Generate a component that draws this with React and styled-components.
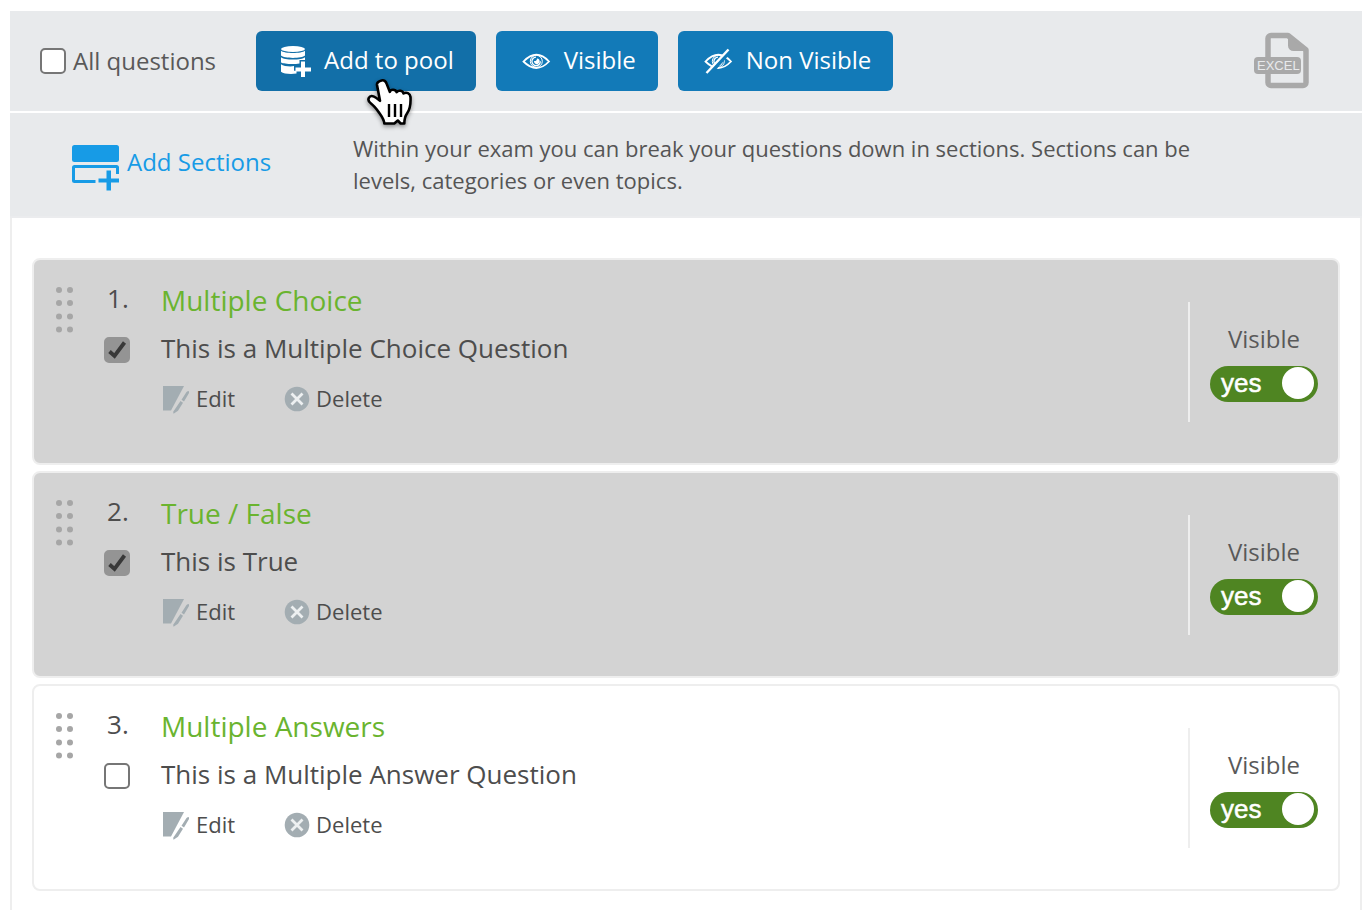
import React, { useState } from "react";
import styled, { createGlobalStyle } from "styled-components";

const GlobalStyle = createGlobalStyle`
  * {
    box-sizing: border-box;
  }
  body {
    margin: 0;
    background-color: white;
    color: #4d4d4d;
    font-family: "Open Sans", "Noto Sans", sans-serif;
  }
  button, input {
    font-family: inherit;
    margin: 0;
  }
  svg {
    display: block;
    flex: none;
  }
`;

const Page = styled.main`
  min-height: 100vh;
  padding: 11px 10px 0;
  display: flex;
  flex-direction: column;
`;

const Bar = styled.div`
  display: flex;
  align-items: center;
  background-color: #e8eaec;
`;

const Toolbar = styled(Bar)`
  gap: 20px;
  padding: 20px 52px 20px 30px;
  margin-bottom: 2px;
`;

const SelectAll = styled.label`
  display: flex;
  align-items: center;
  gap: 7px;
  margin-right: 20px;
  font-size: 24px;
  line-height: 32px;
  color: #595959;
`;

const Checkbox = styled.input`
  appearance: none;
  flex: none;
  display: block;
  width: 26px;
  height: 26px;
  border: 2px solid #767676;
  border-radius: 5px;
  background-color: white;
  &:checked {
    border-color: #949494;
    background: #949494 url("data:image/svg+xml,%3Csvg xmlns='http://www.w3.org/2000/svg' viewBox='0 0 22 22'%3E%3Cpath d='M3.5 12.5L8.5 17L18.5 3.5' fill='none' stroke='%23383838' stroke-width='3.8'/%3E%3C/svg%3E") center / 22px no-repeat;
  }
`;

const Button = styled.button`
  position: relative;
  display: flex;
  align-items: center;
  gap: 12px;
  height: 60px;
  padding: 0 22px 3px 24px;
  border: 0;
  border-radius: 6px;
  color: white;
  background-color: ${props => (props.$active ? "#126fa8" : "#127ab8")};
  font-size: 24px;
  white-space: nowrap;
  svg {
    margin-top: 2px;
  }
`;

const Pointer = styled.svg`
  position: absolute;
  top: 44px;
  left: 110px;
  z-index: 1;
  filter: drop-shadow(0 2px 2px rgba(0, 0, 0, 0.4));
`;

const Export = styled.a`
  margin-left: auto;
`;

const SectionBar = styled(Bar)`
  padding: 19px 160px 20px 62px;
  border-bottom: 2px solid #ebecee;
`;

const AddSections = styled.a`
  display: flex;
  align-items: flex-start;
  gap: 8px;
  flex: 0 0 281px;
  padding-top: 6px;
  color: #179be6;
  font-size: 24px;
  line-height: 38px;
  text-decoration: none;
`;

const Hint = styled.p`
  margin: 0;
  max-width: 860px;
  color: #555555;
  font-size: 22px;
  line-height: 32px;
`;

const List = styled.ol`
  flex: 1;
  display: flex;
  flex-direction: column;
  gap: 6px;
  margin: 0;
  padding: 40px 20px 18px;
  list-style: none;
  border: solid #eeeeee;
  border-width: 0 2px;
`;

const Card = styled.li`
  display: flex;
  align-items: flex-start;
  padding: 20px 20px 41px 22px;
  border: 2px solid #eeeeee;
  border-radius: 8px;
  background-color: ${props => (props.$selected ? "#d3d3d3" : "white")};
`;

const Handle = styled.svg`
  margin: 7px 30px 0 0;
`;

const Order = styled.div`
  width: 57px;
  font-size: 26px;
  line-height: 36px;
  span {
    display: block;
    padding-left: 3px;
    margin-bottom: 21px;
  }
`;

const Body = styled.div`
  flex: 1;
`;

const Title = styled.h2`
  margin: 0 0 8px;
  color: #6ab42f;
  font-size: 28px;
  font-weight: 400;
  line-height: 40px;
`;

const Question = styled.p`
  margin: 0 0 14px;
  font-size: 26px;
  line-height: 40px;
`;

const Actions = styled.div`
  display: flex;
  gap: 48px;
`;

const Action = styled.button`
  display: flex;
  align-items: center;
  gap: 6px;
  padding: 0 0 0 1px;
  border: 0;
  background: none;
  color: #4d4d4d;
  font-size: 22px;
  line-height: 32px;
  svg {
    margin-top: 2px;
  }
`;

const Visibility = styled.div`
  display: flex;
  flex-direction: column;
  align-items: center;
  gap: 11px;
  height: 120px;
  margin-top: 22px;
  padding: 21px 0 0 20px;
  border-left: 2px solid #eeeeee;
  color: #595959;
  font-size: 24px;
  line-height: 32px;
`;

const Switch = styled.label`
  position: relative;
  display: flex;
  align-items: center;
  justify-content: space-between;
  flex-direction: ${props => (props.$on ? "row" : "row-reverse")};
  width: 108px;
  height: 36px;
  padding: 0 4px 2px 11px;
  border-radius: 18px;
  background-color: ${props => (props.$on ? "#4f8522" : "#999999")};
  color: white;
  font-family: "Liberation Sans", Arial, sans-serif;
  font-size: 26px;
  -webkit-text-stroke: 0.5px white;
  input {
    position: absolute;
    inset: 0;
    width: 100%;
    height: 100%;
    opacity: 0;
  }
`;

const Knob = styled.i`
  width: 32px;
  height: 32px;
  border-radius: 50%;
  background-color: white;
`;

const PoolIcon = () => (
    <svg width="32" height="32" viewBox="0 0 32 32" fill="white">
        <ellipse cx="13" cy="4" rx="12" ry="3"/>
        <path d="M1 5.800c3 3 21 3 24 0v4.800c-3 3.200-21 3.200-24 0z"/>
        <path d="M1 12.200c3 3.200 21 3.200 24 0v2.800h-5.500v3.400c-6 1-16 .5-18.500-1z"/>
        <path d="M1 19.200c2.500 2 9 2.600 13 1.900v4.600h2.500v2.800c-6 .9-13 .3-15.500-1.800z"/>
        <path d="M21 16.500h4v6h6v4h-6v5.500h-4v-5.500h-5.500v-4h5.500z"/>
    </svg>
);

const EyeShape = () => (
    <g fill="none" stroke="white">
        <path d="M3.500 16.500Q16.500 3 29 16.500Q16.500 29.500 3.500 16.500Z" strokeWidth="1.800"/>
        <circle cx="16.300" cy="16.300" r="6" strokeWidth="1"/>
        <path d="M16 12.200a4.200 4.200 0 1 0 4.300 4" strokeWidth="1.300"/>
        <path d="M17 13.500c-.2 2-1 2.700-3 2.600c0 4.200 5.600 4.200 5.600 0c0-1.500-1-2.500-2.600-2.600z" fill="white" stroke="none"/>
    </g>
);

const EyeIcon = () => (
    <svg width="32" height="32" viewBox="0 0 32 32">
        <EyeShape/>
    </svg>
);

const EyeOffIcon = () => (
    <svg width="32" height="32" viewBox="0 0 32 32">
        <EyeShape/>
        <path d="M7.500 29L29 5" stroke="#127ab8" strokeWidth="4"/>
        <path d="M4.500 28L26.500 4.500" stroke="white" strokeWidth="2.400"/>
    </svg>
);

const PointerIcon = () => (
    <Pointer width="50" height="54" viewBox="0 0 50 54" aria-hidden="true">
        <path
            d="M15.500 3.500c2.400-.8 4.400.7 5.200 3.400l3.100 8c.6-2.700 5.600-3.200 6.800.2c1.800-2.300 6.200-1.700 6.900 1.400c2.800-1.700 6.600-.3 7 3.500c.3 6-.2 12.200-3.500 16.500c-1.600 2.200-2.600 4.700-2.700 10h-3.700l-2.800-3l-3.500 3h-10c-.2-4-2.500-7-5-10.500c-2.200-3.200-4.500-6.700-8.300-9.500c-5-3.500-1.700-9 3-6.900c2.300 1 3.900 2.600 6 4.200l-3-15.800c-.4-2.500 2.200-3.800 4.500-4.500z"
            fill="white"
            stroke="black"
            strokeWidth="2.600"
            strokeLinejoin="round"
        />
        <path d="M23 27v13M29 27v13M35 27v13" stroke="black" strokeWidth="2.400"/>
    </Pointer>
);

const ExcelIcon = () => (
    <svg width="56" height="58" viewBox="0 0 56 58">
        <path
            d="M17 3.500h17L52 18v32.500a3 3 0 0 1-3 3H17a3 3 0 0 1-3-3V6.500a3 3 0 0 1 3-3z"
            fill="none"
            stroke="#a9a9a9"
            strokeWidth="5.500"
            strokeLinejoin="round"
        />
        <path d="M34 4v9.500a5.500 5.500 0 0 0 5.500 5.500H53z" fill="#a9a9a9"/>
        <rect width="47" height="17" y="25" rx="4" fill="#a9a9a9"/>
        <text x="3" y="38" fill="#e8eaec" fontSize="13" fontFamily="Liberation Sans, Arial, sans-serif">EXCEL</text>
    </svg>
);

const SectionsIcon = () => (
    <svg width="47" height="48" viewBox="0 -2 47 48" fill="#179be6">
        <rect width="47" height="17" rx="2.500"/>
        <path d="M2.500 20H44.500a2.500 2.500 0 0 1 2.500 2.500V29h-3V23H3V35H23.500V38H2.500A2.500 2.500 0 0 1 0 35.500V22.500A2.500 2.500 0 0 1 2.500 20z"/>
        <path d="M34.500 25.500h4.500V33.500h8v4h-8v8h-4.500v-8H26.500v-4h8z"/>
    </svg>
);

const EditIcon = () => (
    <svg width="28" height="30" viewBox="0 0 28 30" fill="#a3adb2">
        <path d="M1 2h21L9 26.500h-8z"/>
        <path d="M24.500 8q3-2.500 2.500 1l-5 8.500l-2.500-1.800zM18.500 17l2.500 1.800l-5 8l-4.500 3l-.3-2z"/>
    </svg>
);

const DeleteIcon = () => (
    <svg width="26" height="26" viewBox="0 0 26 26">
        <circle cx="13" cy="13" r="12.300" fill="#a3adb2"/>
        <path d="M7.500 7.500L18.500 18.500M18.500 7.500L7.500 18.500" stroke="#edf0f1" strokeWidth="2.800"/>
    </svg>
);

const DragHandle = () => (
    <Handle width="18" height="46" viewBox="0 0 18 46" fill="#a6a6a6" aria-hidden="true">
        {[3, 16, 29.500, 42.500].map(y => (
            <g key={y}>
                <circle cx="3" cy={y} r="3"/>
                <circle cx="14" cy={y} r="3"/>
            </g>
        ))}
    </Handle>
);

const questions = [
    { title: "Multiple Choice", text: "This is a Multiple Choice Question", selected: true },
    { title: "True / False", text: "This is True", selected: true },
    { title: "Multiple Answers", text: "This is a Multiple Answer Question", selected: false }
];

const QuestionCard = ({ number, title, text, selected, onSelect }) => {
    const [visible, setVisible] = useState(true);
    return (
        <Card $selected={selected}>
            <DragHandle/>
            <Order>
                <span>{number}.</span>
                <Checkbox type="checkbox" aria-label={title} checked={selected} onChange={onSelect}/>
            </Order>
            <Body>
                <Title>{title}</Title>
                <Question>{text}</Question>
                <Actions>
                    <Action type="button"><EditIcon/>Edit</Action>
                    <Action type="button"><DeleteIcon/>Delete</Action>
                </Actions>
            </Body>
            <Visibility>
                <span>Visible</span>
                <Switch $on={visible}>
                    <input
                        type="checkbox"
                        aria-label="Visible"
                        checked={visible}
                        onChange={() => setVisible(!visible)}
                    />
                    {visible ? "yes" : "no"}
                    <Knob/>
                </Switch>
            </Visibility>
        </Card>
    );
};

export default () => {
    const [items, setItems] = useState(questions);
    const toggle = index =>
        setItems(items.map((item, i) => (i === index ? { ...item, selected: !item.selected } : item)));
    const allSelected = items.every(item => item.selected);

    return (
        <Page>
            <GlobalStyle/>
            <Toolbar>
                <SelectAll>
                    <Checkbox
                        type="checkbox"
                        checked={allSelected}
                        onChange={() => setItems(items.map(item => ({ ...item, selected: !allSelected })))}
                    />
                    All questions
                </SelectAll>
                <Button type="button" $active><PoolIcon/>Add to pool<PointerIcon/></Button>
                <Button type="button"><EyeIcon/>Visible</Button>
                <Button type="button"><EyeOffIcon/>Non Visible</Button>
                <Export href="#excel" aria-label="Export to Excel"><ExcelIcon/></Export>
            </Toolbar>
            <SectionBar>
                <AddSections href="#sections"><SectionsIcon/>Add Sections</AddSections>
                <Hint>
                    Within your exam you can break your questions down in sections. Sections can be
                    levels, categories or even topics.
                </Hint>
            </SectionBar>
            <List>
                {items.map((item, index) => (
                    <QuestionCard key={item.title} number={index + 1} {...item} onSelect={() => toggle(index)}/>
                ))}
            </List>
        </Page>
    );
};
